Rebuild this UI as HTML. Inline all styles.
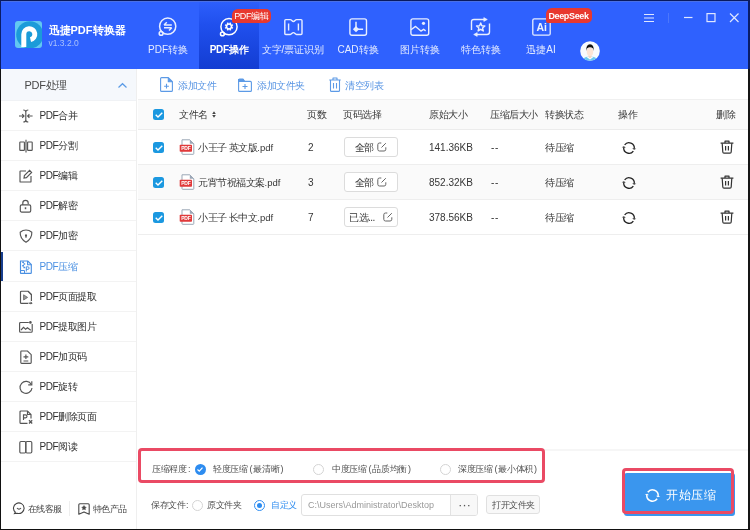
<!DOCTYPE html>
<html><head><meta charset="utf-8">
<style>
*{box-sizing:border-box;margin:0;padding:0}
html,body{width:750px;height:530px;overflow:hidden;background:#fff}
#wrap{position:absolute;left:0;top:0;width:750px;height:530px;will-change:transform}
body{position:relative;font-family:"Liberation Sans",sans-serif;color:#333}
.a{position:absolute;white-space:nowrap}
svg{position:absolute;overflow:visible}
#hdr{position:absolute;left:0;top:0;width:750px;height:69px;background:#2f61fe}
.tab{position:absolute;top:44px;font-size:10px;color:#e6ecff;line-height:11px;text-align:center;width:80px}
.badge{position:absolute;background:#e8382f;color:#fff;font-size:9px;line-height:14px;height:14px;border-radius:6px 5px 5px 2px;text-align:center;letter-spacing:-.4px}
#side{position:absolute;left:0;top:69px;width:137px;height:461px;background:#fff;border-right:1px solid #efefef}
.si{position:absolute;left:0;width:136px;height:30px;border-bottom:1px solid #f3f3f3}
.si span{position:absolute;left:39.5px;top:9px;font-size:10px;letter-spacing:-.5px;line-height:12px;color:#2e2e2e}
.si svg{left:19px;top:8px}
.tb{position:absolute;top:79.5px;font-size:10px;letter-spacing:-.5px;line-height:12px;color:#5a96e4}
.th{position:absolute;top:109px;font-size:10px;letter-spacing:-.5px;line-height:12px;color:#3a3a3a}
.row{position:absolute;left:138px;width:610px;height:35px;border-bottom:1px solid #eeeeee}
.cell{position:absolute;font-size:10px;line-height:12px;color:#363636;top:12px}
.cb{position:absolute;left:15px;top:11.8px;width:11px;height:11px;border-radius:2.5px;background:#1b98e0}
.btn{position:absolute;left:206px;top:7px;width:54px;height:20px;border:1px solid #dcdcdc;border-radius:3px;background:#fff}
.opt{position:absolute;font-size:9px;letter-spacing:-.35px;line-height:10px;color:#505050}
.o2{font-size:9px;letter-spacing:-.5px}
</style></head><body>
<div id="wrap">

<div id="hdr">
 <div class="a" style="left:199px;top:0;width:60px;height:69px;background:linear-gradient(#2e60fd,#2050ee 35%,#133dd2)"></div>
 <!-- logo -->
 <svg style="left:15px;top:21px" width="27" height="27" viewBox="0 0 27 27">
  <defs><clipPath id="lc"><rect x="0" y="0" width="27" height="27" rx="3"/></clipPath></defs>
  <rect x="0" y="0" width="27" height="27" rx="3" fill="#62c8f1"/>
  <g clip-path="url(#lc)"><circle cx="14.8" cy="13.8" r="13.6" fill="#1b9bd9"/></g>
  <path d="M8.8 26 V13.2 A5.5 5.5 0 1 1 15.5 18.6" fill="none" stroke="#fff" stroke-width="5"/>
 </svg>
 <div class="a" style="left:48.5px;top:23.5px;font-size:11px;line-height:13px;font-weight:bold;color:#fff">迅捷PDF转换器</div>
 <div class="a" style="left:48.5px;top:38.5px;font-size:8.5px;line-height:9px;color:#a9c1fb">v1.3.2.0</div>
 <!-- tab icons -->
 <svg style="left:157px;top:16px" width="22" height="22" viewBox="0 0 22 22" fill="none" stroke="#e8eeff" stroke-width="1.5">
  <circle cx="10.7" cy="10.2" r="8.1"/><circle cx="4.1" cy="17.4" r="1.9"/>
  <path d="M7 9 H14.8 M7 9 L9.8 6.3" stroke-width="1.5"/><path d="M7 11.8 H14.8 M14.8 11.8 L12 14.5" stroke-width="1.5"/>
 </svg>
 <svg style="left:218px;top:16px" width="22" height="22" viewBox="0 0 22 22" fill="none" stroke="#fff" stroke-width="1.5">
  <circle cx="11" cy="10.7" r="8.1"/><circle cx="4.4" cy="17.9" r="1.9"/>
  <path fill="#fff" stroke="none" fill-rule="evenodd" d="M15.23 11.26 L14.53 12.96 L13.86 12.33 L12.83 13.36 L13.46 14.03 L11.76 14.73 L11.73 13.82 L10.27 13.82 L10.24 14.73 L8.54 14.03 L9.17 13.36 L8.14 12.33 L7.47 12.96 L6.77 11.26 L7.68 11.23 L7.68 9.77 L6.77 9.74 L7.47 8.04 L8.14 8.67 L9.17 7.64 L8.54 6.97 L10.24 6.27 L10.27 7.18 L11.73 7.18 L11.76 6.27 L13.46 6.97 L12.83 7.64 L13.86 8.67 L14.53 8.04 L15.23 9.74 L14.32 9.77 L14.32 11.23Z M11 8.8 A1.7 1.7 0 1 0 11 12.2 A1.7 1.7 0 1 0 11 8.8Z"/>
 </svg>
 <svg style="left:283px;top:18px" width="21" height="18" viewBox="0 0 21 18" fill="none" stroke="#e8eeff" stroke-width="1.4" stroke-linejoin="round">
  <path d="M2.8 1.6 H7.3 C8.6 1.6 9 3.5 10.4 3.5 C11.8 3.5 12.2 1.6 13.5 1.6 H18 Q19 1.6 19 2.6 V15.5 Q19 16.5 18 16.5 H13.5 C12.2 16.5 11.8 14.6 10.4 14.6 C9 14.6 8.6 16.5 7.3 16.5 H2.8 Q1.8 16.5 1.8 15.5 V2.6 Q1.8 1.6 2.8 1.6Z"/>
  <path d="M5.6 5.6 V12.6 M15.4 5.6 V12.6"/>
 </svg>
 <svg style="left:349px;top:18px" width="19" height="18" viewBox="0 0 19 18" fill="none" stroke="#e8eeff" stroke-width="1.4">
  <rect x="0.9" y="0.9" width="16.6" height="16.4" rx="2"/>
  <path d="M7 3.8 V11.2 H14.1" stroke-width="1.5"/><path d="M7 8 L10.1 11.2 L7 14.3 L3.9 11.2 Z" fill="#e8eeff" stroke="none"/>
 </svg>
 <svg style="left:409.8px;top:18px" width="20" height="18" viewBox="0 0 20 18" fill="none" stroke="#e8eeff" stroke-width="1.4" stroke-linejoin="round">
  <rect x="0.9" y="0.9" width="17.8" height="16.4" rx="2"/>
  <path d="M1 11.7 L5.6 8.4 L10.9 13.1 L13.6 11.3 L15.6 12.9"/><circle cx="13.5" cy="5.3" r="1.6" fill="#e8eeff" stroke="none"/>
 </svg>
 <svg style="left:470px;top:17px" width="21" height="20" viewBox="0 0 21 20" fill="none" stroke="#e8eeff" stroke-width="1.4" stroke-linejoin="round">
  <path d="M1.5 13 V5 Q1.5 2.5 4 2.5 H14.5"/><path d="M13.8 0.6 L17.3 2.5 L13.8 4.4Z" fill="#e8eeff" stroke-width=".6"/>
  <path d="M19.5 6.5 V15 Q19.5 17.5 17 17.5 H6.5"/><path d="M7.2 15.6 L3.7 17.5 L7.2 19.4Z" fill="#e8eeff" stroke-width=".6"/>
  <path d="M10.70 6.00 L11.82 8.86 L14.88 9.04 L12.51 10.99 L13.29 13.96 L10.70 12.30 L8.11 13.96 L8.89 10.99 L6.52 9.04 L9.58 8.86Z"/>
 </svg>
 <svg style="left:532px;top:18px" width="19" height="18" viewBox="0 0 19 18" fill="none" stroke="#e8eeff" stroke-width="1.3">
  <rect x="0.8" y="0.8" width="17.4" height="16.4" rx="1.5"/>
 </svg>
 <div class="a" style="left:536.5px;top:20.5px;font-size:10.5px;line-height:12px;font-weight:bold;color:#eef2ff">Ai</div>
 <!-- tab labels -->
 <div class="tab" style="left:128px">PDF转换</div>
 <div class="tab" style="left:189px;font-weight:bold;color:#fff;letter-spacing:-.3px">PDF操作</div>
 <div class="tab" style="left:253px">文字/票证识别</div>
 <div class="tab" style="left:318px">CAD转换</div>
 <div class="tab" style="left:380px">图片转换</div>
 <div class="tab" style="left:441px">特色转换</div>
 <div class="tab" style="left:501px">迅捷AI</div>
 <!-- badges -->
 <div class="badge" style="left:232px;top:8.5px;width:38.5px">PDF编辑</div>
 <div class="badge" style="left:545.5px;top:8px;width:46px;height:14.5px;line-height:16px;font-size:9px;font-weight:bold;letter-spacing:-.35px">DeepSeek</div>
 <!-- avatar -->
 <svg style="left:579.5px;top:40.5px" width="20" height="20" viewBox="0 0 21 21">
  <defs><clipPath id="av"><circle cx="10.5" cy="10.5" r="10.3"/></clipPath></defs>
  <circle cx="10.5" cy="10.5" r="10.3" fill="#f8fafd"/>
  <g clip-path="url(#av)">
   <path d="M2.5 21 Q3.5 16.3 10.5 16.3 Q17.5 16.3 18.5 21 Z" fill="#6cc8ee"/>
   <path d="M6.5 16.5 L10.5 19.3 L14.5 16.5 Z" fill="#fff"/>
   <path d="M9 14 H12 V17 L10.5 18 L9 17Z" fill="#f6d5c2"/>
   <ellipse cx="10.5" cy="11.3" rx="3.4" ry="4.4" fill="#fce4d6"/>
   <path d="M6.6 10.5 Q6.2 3.5 10.5 3.5 Q14.8 3.5 14.4 10.5 L13.7 7.8 Q12.2 6.6 10.5 6.6 Q8.8 6.6 7.3 7.8 Z" fill="#121212"/>
  </g>
 </svg>
 <!-- window controls -->
 <svg style="left:644px;top:13px" width="100" height="10" viewBox="0 0 100 10" fill="none" stroke="#dfe7ff" stroke-width="1.2">
  <path d="M0 1.5 H10 M0 5 H10 M0 8.5 H10"/>
  <path d="M24.5 0 V10" stroke="#4c77fc" stroke-width="1"/>
  <path d="M40 4.5 H48.5"/>
  <rect x="63" y="0.6" width="8" height="8"/>
  <path d="M86 0.5 L94.5 9 M94.5 0.5 L86 9"/>
 </svg>
</div>

<div id="side">
<div class="a" style="left:0;top:0;width:136px;height:32px;background:#f5f8fc;border-bottom:1px solid #f0f2f5"></div>
<div class="a" style="left:24.5px;top:10px;font-size:11px;letter-spacing:-.3px;line-height:13px;color:#484848">PDF处理</div>
<svg style="left:118px;top:14px" width="9" height="5" viewBox="0 0 9 5" fill="none" stroke="#5b9be6" stroke-width="1.2"><path d="M0.5 4.5 L4.5 0.7 L8.5 4.5"/></svg>
<div class="si" style="top:32.00px"><svg width="14" height="14" viewBox="0 0 14 14" fill="none" stroke="#555" stroke-width="1.15"><path d="M4.3 1 Q6.8 1 6.8 3 V11 Q6.8 13 4.3 13 M9.3 1 Q6.8 1 6.8 3 M6.8 11 Q6.8 13 9.3 13"/><path d="M0 7 H5 M3.2 5.2 L5 7 L3.2 8.8 M13.6 7 H8.6 M10.4 5.2 L8.6 7 L10.4 8.8"/></svg><span>PDF合并</span></div>
<div class="si" style="top:62.12px"><svg width="14" height="14" viewBox="0 0 14 14" fill="none" stroke="#555" stroke-width="1.15"><rect x="0.8" y="3" width="4.6" height="8.4" rx="0.6"/><rect x="8.6" y="3" width="4.6" height="8.4" rx="0.6"/><path d="M7 0.8 V13.6"/></svg><span>PDF分割</span></div>
<div class="si" style="top:92.24px"><svg width="14" height="14" viewBox="0 0 14 14" fill="none" stroke="#555" stroke-width="1.15"><path d="M12 7 V12.4 Q12 13 11.4 13 H1.6 Q1 13 1 12.4 V2.6 Q1 2 1.6 2 H7"/><path d="M5 9 L5.4 6.6 L10.6 1.4 L12.6 3.4 L7.4 8.6 Z"/></svg><span>PDF编辑</span></div>
<div class="si" style="top:122.36px"><svg width="14" height="14" viewBox="0 0 14 14" fill="none" stroke="#555" stroke-width="1.15"><rect x="1.3" y="5.9" width="10.4" height="7.2" rx="1.4"/><path d="M3.8 5.9 V4 A2.7 2.7 0 0 1 9.2 4 V5"/><path d="M6.5 8.3 V10.2" stroke-width="1.5"/></svg><span>PDF解密</span></div>
<div class="si" style="top:152.48px"><svg width="14" height="14" viewBox="0 0 14 14" fill="none" stroke="#555" stroke-width="1.15"><path d="M1.2 3.2 Q3.8 1 7 1 Q10.2 1 12.8 3.2 Q13.2 9.4 7 13.2 Q0.8 9.4 1.2 3.2Z"/><path d="M7 5.2 A1.15 1.15 0 0 1 7.9 7 L7.3 9 H6.7 L6.1 7 A1.15 1.15 0 0 1 7 5.2Z" fill="#555" stroke="none"/></svg><span>PDF加密</span></div>
<div class="si" style="top:182.60px"><svg width="14" height="14" viewBox="0 0 14 14" fill="none" stroke="#555" stroke-width="1.15"><g stroke="#4a90e2"><path d="M1.5 1 H8.8 L12.3 4.5 V12.8 Q12.3 13.4 11.7 13.4 H2.1 Q1.5 13.4 1.5 12.8 Z"/><path d="M8.6 1 V4.7 H12.3"/><path d="M3.2 2.2 H5 M4.4 4 H6.2 M3.2 5.8 H5 M4.4 7.6 H6.2" stroke-width="1.5"/><path d="M7.3 11.5 V6.8 H8.8 A1.3 1.3 0 0 1 8.8 9.4 H7.3" stroke-width="1"/><path d="M1.5 10.5 H5.5 V13.4" stroke-width="1"/></g></svg><span style="color:#4a90e2">PDF压缩</span></div>
<div class="si" style="top:212.72px"><svg width="14" height="14" viewBox="0 0 14 14" fill="none" stroke="#555" stroke-width="1.15"><path d="M12.4 11 V4.6 L9 1.2 H2.5 Q1.5 1.2 1.5 2.2 V12.4 Q1.5 13.4 2.5 13.4 H9"/><path d="M9 1.2 L12.4 4.6"/><path d="M4.6 4.8 V10 L8.6 7.4 Z" fill="#999" stroke="#666" stroke-width=".8" stroke-linejoin="round"/><path d="M9.5 13.2 H12.5" stroke-width="1.2"/><path d="M11.6 11.6 L13.6 13.2 L11.6 14.6Z" fill="#555" stroke="none"/></svg><span>PDF页面提取</span></div>
<div class="si" style="top:242.84px"><svg width="14" height="14" viewBox="0 0 14 14" fill="none" stroke="#555" stroke-width="1.15"><path d="M9.8 2.5 H1.6 Q0.6 2.5 0.6 3.5 V11.2 Q0.6 12.2 1.6 12.2 H12.2 Q13.2 12.2 13.2 11.2 V4"/><path d="M2 10 L4.5 7.4 L6.6 9.3 L8.4 7.8 L11.8 10.3"/><circle cx="11.4" cy="2.4" r="1.3" fill="#555" stroke="none"/></svg><span>PDF提取图片</span></div>
<div class="si" style="top:272.96px"><svg width="14" height="14" viewBox="0 0 14 14" fill="none" stroke="#555" stroke-width="1.15"><path d="M1.8 1 H8.5 L12.2 4.7 V12.6 Q12.2 13.4 11.4 13.4 H2.6 Q1.8 13.4 1.8 12.6 V1.8 Q1.8 1 2.6 1Z"/><path d="M4.5 6.8 H9.3 M6.9 4.5 V9 M4.5 11 H9.3"/></svg><span>PDF加页码</span></div>
<div class="si" style="top:303.08px"><svg width="14" height="14" viewBox="0 0 14 14" fill="none" stroke="#555" stroke-width="1.15"><path d="M12.3 4.5 A6 6 0 1 0 13 8"/><path d="M12.8 1.2 V4.9 H9.2"/></svg><span>PDF旋转</span></div>
<div class="si" style="top:333.20px"><svg width="14" height="14" viewBox="0 0 14 14" fill="none" stroke="#555" stroke-width="1.15"><path d="M12 8.5 V4.5 L8.5 1 H2 Q1 1 1 2 V12.4 Q1 13.4 2 13.4 H8.5"/><path d="M8.5 1 V4.5 H12"/><path d="M4.5 10 V4.8 H6.5 A1.5 1.5 0 0 1 6.5 7.8 H4.5"/><path d="M10 10.3 L13.2 13.5 M13.2 10.3 L10 13.5" stroke-width="1.3"/></svg><span>PDF删除页面</span></div>
<div class="si" style="top:363.32px"><svg width="14" height="14" viewBox="0 0 14 14" fill="none" stroke="#555" stroke-width="1.15"><rect x="0.8" y="1.5" width="6" height="11.5" rx="1.2"/><rect x="6.8" y="1.5" width="6" height="11.5" rx="1.2"/></svg><span>PDF阅读</span></div>
<div class="a" style="left:1px;top:182.6px;width:2.4px;height:29px;background:#173e8e"></div>
<svg style="left:13px;top:433.3px" width="12" height="12" viewBox="0 0 12 12" fill="none" stroke="#444" stroke-width="1.1"><path d="M2.3 10.2 A5.3 5.3 0 1 1 4 11.2 L1.5 11.5 Z"/><path d="M4 6 Q6 8.2 8 6"/></svg>
<div class="a" style="left:28px;top:435px;font-size:9px;letter-spacing:-.7px;line-height:10px;color:#444">在线客服</div>
<div class="a" style="left:69px;top:432px;width:1px;height:15px;background:#eee"></div>
<svg style="left:78px;top:433.5px" width="12" height="12" viewBox="0 0 12 12" fill="none" stroke="#4a4a4a" stroke-width="1.1" stroke-linejoin="round"><path d="M1.8 0.7 H10.2 Q11.2 0.7 11.2 1.7 V11.3 L6 8.9 L0.8 11.3 V1.7 Q0.8 0.7 1.8 0.7 Z"/><path d="M6 2.6 L6.8 4 L8.2 4.2 L7.2 5.3 L7.4 6.7 L6 6.1 L4.6 6.7 L4.8 5.3 L3.8 4.2 L5.2 4 Z" fill="#4a4a4a" stroke-width=".6"/></svg>
<div class="a" style="left:93px;top:435px;font-size:9px;letter-spacing:-.7px;line-height:10px;color:#444">特色产品</div>
</div>
<div id="main">
 <!-- toolbar -->
 <svg style="left:160px;top:77px" width="13" height="15" viewBox="0 0 13 15" fill="none" stroke="#5c9ae6" stroke-width="1.1" stroke-linejoin="round">
  <path d="M8.3 0.6 H1.6 Q0.6 0.6 0.6 1.6 V13.4 Q0.6 14.4 1.6 14.4 H11.4 Q12.4 14.4 12.4 13.4 V4.7"/><path d="M8.3 0.6 L12.4 4.7 H8.3 Z" fill="#5c9ae6"/><path d="M6.5 6.8 V11.6 M4.1 9.2 H8.9"/>
 </svg>
 <div class="tb" style="left:178px">添加文件</div>
 <svg style="left:238px;top:78px" width="14" height="14" viewBox="0 0 14 14" fill="none" stroke="#5c9ae6" stroke-width="1.1" stroke-linejoin="round">
  <path d="M0.6 2.5 V12.4 Q0.6 13.4 1.6 13.4 H12.4 Q13.4 13.4 13.4 12.4 V4.4 Q13.4 3.4 12.4 3.4 H6.6 L5 1 H1.6 Q0.6 1 0.6 2 Z"/><path d="M0.6 1.5 H5 L6.3 3.4 H0.6Z" fill="#5c9ae6"/><path d="M7 6 V11 M4.5 8.5 H9.5"/>
 </svg>
 <div class="tb" style="left:257px">添加文件夹</div>
 <svg style="left:329px;top:77px" width="12" height="15" viewBox="0 0 12 15" fill="none" stroke="#5c9ae6" stroke-width="1.1" stroke-linejoin="round">
  <path d="M0.3 3 H11.7 M4 3 V1 H8 V3"/><path d="M1.5 3 V13.4 Q1.5 14.4 2.5 14.4 H9.5 Q10.5 14.4 10.5 13.4 V3"/><path d="M4.5 6 V11.5 M7.5 6 V11.5"/>
 </svg>
 <div class="tb" style="left:345px">清空列表</div>
 <!-- table header -->
 <div class="a" style="left:138px;top:99px;width:610px;height:31px;background:#fafafa;border-top:1px solid #f0f0f0;border-bottom:1px solid #ececec"></div>
 <div class="a" style="left:153px;top:109px;width:11px;height:11px;border-radius:2.5px;background:#1b98e0"></div>
 <svg style="left:155px;top:112px" width="8" height="6" viewBox="0 0 8 6" fill="none" stroke="#fff" stroke-width="1.4"><path d="M0.7 2.8 L3 5 L7.3 0.8"/></svg>
 <div class="th" style="left:179px">文件名</div>
 <svg style="left:212px;top:111px" width="4" height="7" viewBox="0 0 4 7" fill="#444"><path d="M0.2 2.9 L2 0.2 L3.8 2.9Z M0.2 4.1 L2 6.8 L3.8 4.1Z"/></svg>
 <div class="th" style="left:307px">页数</div>
 <div class="th" style="left:343px">页码选择</div>
 <div class="th" style="left:429px">原始大小</div>
 <div class="th" style="left:490px">压缩后大小</div>
 <div class="th" style="left:545px">转换状态</div>
 <div class="th" style="left:618px">操作</div>
 <div class="th" style="left:716px">删除</div>

 <div class="row" style="top:130px;background:#fff">
  <div class="cb"></div>
  <svg style="left:17px;top:14.8px" width="8" height="6" viewBox="0 0 8 6" fill="none" stroke="#fff" stroke-width="1.4"><path d="M0.7 2.8 L3 5 L7.3 0.8"/></svg>
  <svg style="left:41px;top:9px" width="16" height="16" viewBox="0 0 16 16">
   <path d="M3 0.8 H10.8 L14.8 4.8 V14.6 Q14.8 15.3 14.1 15.3 H3.7 Q3 15.3 3 14.6 Z" fill="#fff" stroke="#9ba7b6" stroke-width="1"/>
   <path d="M10.8 0.8 L14.8 4.8 H10.8 Z" fill="#9ba7b6"/>
   <rect x="0.7" y="5.8" width="12.3" height="6.9" rx="0.8" fill="#e0393a"/>
   <text x="6.85" y="11" font-size="5" font-weight="bold" fill="#fff" text-anchor="middle" font-family="Liberation Sans" letter-spacing="-0.2">PDF</text>
  </svg>
  <div class="cell" style="left:60px;font-size:10px;letter-spacing:-.5px">小王子 英文版<span style="font-size:9.5px;letter-spacing:0">.pdf</span></div>
  <div class="cell" style="left:170px">2</div>
  <div class="btn"><div class="a" style="left:9.5px;top:4px;font-size:10px;letter-spacing:-.5px;line-height:12px;color:#363636">全部</div>
   <svg style="left:32px;top:4px" width="10" height="10" viewBox="0 0 10 10" fill="none" stroke="#666" stroke-width="1"><path d="M8.8 5.3 V7.3 Q8.8 9 7.1 9 H2.5 Q0.8 9 0.8 7.3 V2.7 Q0.8 1 2.5 1 H4.3"/><path d="M4.5 5.5 L8.8 1.2"/></svg>
  </div>
  <div class="cell" style="left:291px">141.36KB</div>
  <div class="cell" style="left:353px;letter-spacing:.6px">--</div>
  <div class="cell" style="left:407px;font-size:10px;letter-spacing:-.5px">待压缩</div>
  <svg style="left:484px;top:11px" width="14" height="14" viewBox="0 0 14 14" fill="none" stroke="#222" stroke-width="1.3">
   <path d="M2.66 3.96 A5.3 5.3 0 0 1 12.25 7.74"/><path d="M11.34 10.04 A5.3 5.3 0 0 1 1.75 6.26"/>
   <path d="M12.01 8.73 L14.37 7.64 L10.19 7.28Z M1.99 5.27 L-0.37 6.36 L3.81 6.72Z" fill="#222" stroke="none"/>
  </svg>
  <svg style="left:582px;top:10px" width="14" height="14" viewBox="0 0 14 14" fill="none" stroke="#333" stroke-width="1.2" stroke-linejoin="round">
   <path d="M0.6 3.2 H13.4 M5 3.2 V1.2 H9 V3.2"/><path d="M2.2 3.2 L2.8 12 Q2.9 13.2 4 13.2 H10 Q11.1 13.2 11.2 12 L11.8 3.2"/><path d="M5.6 6 V10.4 M8.4 6 V10.4"/>
  </svg>
 </div>
 <div class="row" style="top:165px;background:#fafafa">
  <div class="cb"></div>
  <svg style="left:17px;top:14.8px" width="8" height="6" viewBox="0 0 8 6" fill="none" stroke="#fff" stroke-width="1.4"><path d="M0.7 2.8 L3 5 L7.3 0.8"/></svg>
  <svg style="left:41px;top:9px" width="16" height="16" viewBox="0 0 16 16">
   <path d="M3 0.8 H10.8 L14.8 4.8 V14.6 Q14.8 15.3 14.1 15.3 H3.7 Q3 15.3 3 14.6 Z" fill="#fff" stroke="#9ba7b6" stroke-width="1"/>
   <path d="M10.8 0.8 L14.8 4.8 H10.8 Z" fill="#9ba7b6"/>
   <rect x="0.7" y="5.8" width="12.3" height="6.9" rx="0.8" fill="#e0393a"/>
   <text x="6.85" y="11" font-size="5" font-weight="bold" fill="#fff" text-anchor="middle" font-family="Liberation Sans" letter-spacing="-0.2">PDF</text>
  </svg>
  <div class="cell" style="left:60px;font-size:10px;letter-spacing:-.5px">元宵节祝福文案<span style="font-size:9.5px;letter-spacing:0">.pdf</span></div>
  <div class="cell" style="left:170px">3</div>
  <div class="btn"><div class="a" style="left:9.5px;top:4px;font-size:10px;letter-spacing:-.5px;line-height:12px;color:#363636">全部</div>
   <svg style="left:32px;top:4px" width="10" height="10" viewBox="0 0 10 10" fill="none" stroke="#666" stroke-width="1"><path d="M8.8 5.3 V7.3 Q8.8 9 7.1 9 H2.5 Q0.8 9 0.8 7.3 V2.7 Q0.8 1 2.5 1 H4.3"/><path d="M4.5 5.5 L8.8 1.2"/></svg>
  </div>
  <div class="cell" style="left:291px">852.32KB</div>
  <div class="cell" style="left:353px;letter-spacing:.6px">--</div>
  <div class="cell" style="left:407px;font-size:10px;letter-spacing:-.5px">待压缩</div>
  <svg style="left:484px;top:11px" width="14" height="14" viewBox="0 0 14 14" fill="none" stroke="#222" stroke-width="1.3">
   <path d="M2.66 3.96 A5.3 5.3 0 0 1 12.25 7.74"/><path d="M11.34 10.04 A5.3 5.3 0 0 1 1.75 6.26"/>
   <path d="M12.01 8.73 L14.37 7.64 L10.19 7.28Z M1.99 5.27 L-0.37 6.36 L3.81 6.72Z" fill="#222" stroke="none"/>
  </svg>
  <svg style="left:582px;top:10px" width="14" height="14" viewBox="0 0 14 14" fill="none" stroke="#333" stroke-width="1.2" stroke-linejoin="round">
   <path d="M0.6 3.2 H13.4 M5 3.2 V1.2 H9 V3.2"/><path d="M2.2 3.2 L2.8 12 Q2.9 13.2 4 13.2 H10 Q11.1 13.2 11.2 12 L11.8 3.2"/><path d="M5.6 6 V10.4 M8.4 6 V10.4"/>
  </svg>
 </div>
 <div class="row" style="top:200px;background:#fff">
  <div class="cb"></div>
  <svg style="left:17px;top:14.8px" width="8" height="6" viewBox="0 0 8 6" fill="none" stroke="#fff" stroke-width="1.4"><path d="M0.7 2.8 L3 5 L7.3 0.8"/></svg>
  <svg style="left:41px;top:9px" width="16" height="16" viewBox="0 0 16 16">
   <path d="M3 0.8 H10.8 L14.8 4.8 V14.6 Q14.8 15.3 14.1 15.3 H3.7 Q3 15.3 3 14.6 Z" fill="#fff" stroke="#9ba7b6" stroke-width="1"/>
   <path d="M10.8 0.8 L14.8 4.8 H10.8 Z" fill="#9ba7b6"/>
   <rect x="0.7" y="5.8" width="12.3" height="6.9" rx="0.8" fill="#e0393a"/>
   <text x="6.85" y="11" font-size="5" font-weight="bold" fill="#fff" text-anchor="middle" font-family="Liberation Sans" letter-spacing="-0.2">PDF</text>
  </svg>
  <div class="cell" style="left:60px;font-size:10px;letter-spacing:-.5px">小王子 长中文<span style="font-size:9.5px;letter-spacing:0">.pdf</span></div>
  <div class="cell" style="left:170px">7</div>
  <div class="btn"><div class="a" style="left:4px;top:4px;font-size:10px;letter-spacing:-.5px;line-height:12px;color:#363636">已选...</div>
   <svg style="left:38px;top:4px" width="10" height="10" viewBox="0 0 10 10" fill="none" stroke="#666" stroke-width="1"><path d="M8.8 5.3 V7.3 Q8.8 9 7.1 9 H2.5 Q0.8 9 0.8 7.3 V2.7 Q0.8 1 2.5 1 H4.3"/><path d="M4.5 5.5 L8.8 1.2"/></svg>
  </div>
  <div class="cell" style="left:291px">378.56KB</div>
  <div class="cell" style="left:353px;letter-spacing:.6px">--</div>
  <div class="cell" style="left:407px;font-size:10px;letter-spacing:-.5px">待压缩</div>
  <svg style="left:484px;top:11px" width="14" height="14" viewBox="0 0 14 14" fill="none" stroke="#222" stroke-width="1.3">
   <path d="M2.66 3.96 A5.3 5.3 0 0 1 12.25 7.74"/><path d="M11.34 10.04 A5.3 5.3 0 0 1 1.75 6.26"/>
   <path d="M12.01 8.73 L14.37 7.64 L10.19 7.28Z M1.99 5.27 L-0.37 6.36 L3.81 6.72Z" fill="#222" stroke="none"/>
  </svg>
  <svg style="left:582px;top:10px" width="14" height="14" viewBox="0 0 14 14" fill="none" stroke="#333" stroke-width="1.2" stroke-linejoin="round">
   <path d="M0.6 3.2 H13.4 M5 3.2 V1.2 H9 V3.2"/><path d="M2.2 3.2 L2.8 12 Q2.9 13.2 4 13.2 H10 Q11.1 13.2 11.2 12 L11.8 3.2"/><path d="M5.6 6 V10.4 M8.4 6 V10.4"/>
  </svg>
 </div>
 <!-- bottom panel -->
 <div class="a" style="left:138px;top:448.5px;width:610px;height:2px;background:#f6f6f6"></div>
 <div class="opt" style="left:152px;top:464px">压缩程度<span style="margin-left:1.5px">:</span></div>
 <div class="a" style="left:194.5px;top:463.5px;width:11px;height:11px;border-radius:50%;background:#2d8cf0"></div>
 <svg style="left:197px;top:466.5px" width="6" height="5" viewBox="0 0 6 5" fill="none" stroke="#fff" stroke-width="1.2"><path d="M0.5 2.5 L2.3 4.2 L5.5 0.7"/></svg>
 <div class="opt" style="left:213px;top:464px">轻度压缩<span style="margin:0 1.2px 0 2px">(</span>最清晰<span style="margin-left:1px">)</span></div>
 <div class="a" style="left:313px;top:463.5px;width:11px;height:11px;border-radius:50%;border:1px solid #d3d3d3"></div>
 <div class="opt" style="left:332px;top:464px">中度压缩<span style="margin:0 1.2px 0 2px">(</span>品质均衡<span style="margin-left:1px">)</span></div>
 <div class="a" style="left:440px;top:463.5px;width:11px;height:11px;border-radius:50%;border:1px solid #d3d3d3"></div>
 <div class="opt" style="left:458px;top:464px">深度压缩<span style="margin:0 1.2px 0 2px">(</span>最小体积<span style="margin-left:1px">)</span></div>

 <div class="opt o2" style="left:151px;top:500px">保存文件<span style="margin-left:1px">:</span></div>
 <div class="a" style="left:191.5px;top:499.5px;width:11px;height:11px;border-radius:50%;border:1px solid #d3d3d3"></div>
 <div class="opt o2" style="left:207px;top:500px">原文件夹</div>
 <div class="a" style="left:254px;top:499.5px;width:11px;height:11px;border-radius:50%;border:1px solid #2d8cf0"></div>
 <div class="a" style="left:257px;top:502.5px;width:5px;height:5px;border-radius:50%;background:#2d8cf0"></div>
 <div class="opt o2" style="left:271px;top:500px;color:#2d8cf0">自定义</div>
 <div class="a" style="left:301px;top:493.5px;width:177px;height:22px;border:1px solid #e0e0e0;border-radius:3px"></div>
 <div class="a" style="left:450px;top:494.5px;width:27px;height:20px;background:#f8f8f8;border-left:1px solid #e2e2e2;border-radius:0 2px 2px 0"></div>
 <div class="opt" style="left:308px;top:499.5px;color:#999;letter-spacing:0">C:\Users\Administrator\Desktop</div>
 <div class="opt" style="left:459px;top:500.5px;color:#555;font-weight:bold;letter-spacing:1.2px">···</div>
 <div class="a" style="left:485.5px;top:494.5px;width:54px;height:19.5px;border:1px solid #e0e0e0;border-radius:3px;background:#f8f8f8"></div>
 <div class="opt o2" style="left:492px;top:500px">打开文件夹</div>

 <!-- start button -->
 <div class="a" style="left:624px;top:473px;width:111px;height:42.5px;border-radius:3px;background:#3a96ee"></div>
 <svg style="left:645px;top:488px" width="15" height="15" viewBox="0 0 14 14" fill="none" stroke="#fff" stroke-width="1.4">
  <path d="M2.66 3.96 A5.3 5.3 0 0 1 12.25 7.74"/><path d="M11.34 10.04 A5.3 5.3 0 0 1 1.75 6.26"/>
  <path d="M12.01 8.73 L14.37 7.64 L10.19 7.28Z M1.99 5.27 L-0.37 6.36 L3.81 6.72Z" fill="#fff" stroke="none"/>
 </svg>
 <div class="a" style="left:666px;top:488px;font-size:12px;letter-spacing:.6px;line-height:15px;color:#fff">开始压缩</div>

 <!-- red highlight boxes -->
 <div class="a" style="left:137.5px;top:447.5px;width:407px;height:35px;border:3px solid #ea4a64;border-radius:4px"></div>
 <div class="a" style="left:621.5px;top:468px;width:112px;height:46px;border:3.5px solid #ea4a64;border-radius:4px"></div>
</div>
<!-- window border -->
<div class="a" style="left:0;top:0;width:750px;height:1px;background:#08195e"></div>
<div class="a" style="left:0;top:1px;width:750px;height:1px;background:#4a70e6"></div>
<div class="a" style="left:0;top:0;width:1px;height:530px;background:#111"></div>
<div class="a" style="left:0;top:0;width:1px;height:69px;background:#0a1c66"></div>
<div class="a" style="left:748.4px;top:0;width:1.6px;height:530px;background:#151515"></div>
<div class="a" style="left:748.4px;top:0;width:1.6px;height:69px;background:#0a1c66"></div>
<div class="a" style="left:0;top:529px;width:750px;height:1px;background:#111"></div>

</div>
</body></html>
